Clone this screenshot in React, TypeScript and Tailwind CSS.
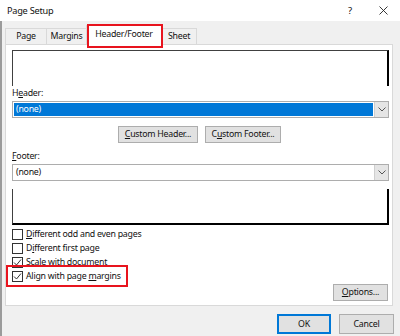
import React from 'react';

const tabs = [
  { label: 'Page', w: 'w-[42px]', active: false },
  { label: 'Margins', w: 'w-[41px]', active: false },
  { label: 'Header/Footer', w: 'w-[76px]', active: true },
  { label: 'Sheet', w: 'w-[36px]', active: false },
];

const Chevron: React.FC = () => (
  <svg width="8" height="5" viewBox="0 0 8 5" className="block">
    <polyline points="0.5,0.5 4,4 7.5,0.5" fill="none" stroke="#555" strokeWidth="1" />
  </svg>
);

const Select: React.FC<{ selected?: boolean }> = ({ selected }) => (
  <div className="h-[17px] border border-[#adadad] bg-white flex items-stretch">
    <div className="flex-1 p-[1px] flex">
      <div className={`flex-1 flex items-center pl-[2px] ${selected ? 'bg-[#0078d7] text-white' : ''}`}>(none)</div>
    </div>
    <div className="w-[14px] bg-[#e5e5e5] border-l border-[#cfcfcf] flex items-center justify-center">
      <Chevron />
    </div>
  </div>
);

const Button: React.FC<{ className?: string; children: React.ReactNode }> = ({ className = '', children }) => (
  <div className={`h-[17px] bg-[#e1e1e1] border border-[#adadad] flex items-center justify-center ${className}`}>
    {children}
  </div>
);

const CheckRow: React.FC<{ checked?: boolean; children: React.ReactNode }> = ({ checked, children }) => (
  <div className="h-[14px] flex items-center">
    <div className="w-[11px] h-[11px] border border-[#333] bg-white flex items-center justify-center">
      {checked && (
        <svg width="9" height="9" viewBox="0 0 9 9" className="block">
          <polyline points="1,4.5 3.5,7 8,1.5" fill="none" stroke="#333" strokeWidth="1" />
        </svg>
      )}
    </div>
    <span className="ml-[3px]">{children}</span>
  </div>
);

export default function App() {
  return (
    <div className="w-[400px] h-[336px] bg-[#f0f0f0] relative overflow-hidden font-['Noto_Sans',sans-serif] text-[8.8px] tracking-[-0.25px] leading-none text-[#111]">
      {/* title bar */}
      <div className="h-[21px] bg-white flex items-center pl-[7px]">
        <span className="text-[9.2px]">Page Setup</span>
        <span className="ml-auto w-[10px] text-center text-[9.5px]">?</span>
        <svg width="9" height="9" viewBox="0 0 9 9" className="ml-[24px] mr-[12px]">
          <path d="M0.5 0.5 L8.5 8.5 M8.5 0.5 L0.5 8.5" stroke="#222" strokeWidth="0.9" />
        </svg>
      </div>

      <div className="h-[315px] border-l-2 border-[#9b9b9b] pl-[3px] pr-[7px] flex flex-col">
        {/* tabs */}
        <div className="h-[23px] flex items-end relative z-10">
          {tabs.map((t) => (
            <div
              key={t.label}
              className={`${t.w} flex items-center justify-center border border-b-0 border-[#d9d9d9] -mr-px ${
                t.active ? 'h-[20px] -mb-px bg-white pb-[2px]' : 'h-[16px] bg-[#f0f0f0]'
              }`}
            >
              {t.label}
            </div>
          ))}
        </div>

        {/* panel */}
        <div className="h-[262px] bg-white border border-[#d9d9d9] pl-[6px] pr-[3px] pt-[5px] flex flex-col">
          <div className="h-[36px] border-t border-l border-[#404040] border-r-2 border-r-black" />

          <div className="h-[15px] flex items-center">
            H<span className="underline">e</span>ader:
          </div>
          <Select selected />

          <div className="mt-[8px] ml-[106px] flex gap-[7px]">
            <Button className="w-[80px]">
              <span><span className="underline">C</span>ustom Header...</span>
            </Button>
            <Button className="w-[76px]">
              <span>C<span className="underline">u</span>stom Footer...</span>
            </Button>
          </div>

          <div className="mt-[6px] h-[15px] flex items-center">
            <span className="underline">F</span>ooter:
          </div>
          <Select />

          <div className="mt-[8px] h-[36px] border-l border-[#404040] border-b-2 border-b-black border-r-2 border-r-black" />

          <div className="mt-[2px] flex flex-col">
            <CheckRow>
              <span className="underline">D</span>ifferent odd and even pages
            </CheckRow>
            <CheckRow>
              D<span className="underline">i</span>fferent first page
            </CheckRow>
            <CheckRow checked>
              Sca<span className="underline">l</span>e with document
            </CheckRow>
            <CheckRow checked>
              Align with page <span className="underline">m</span>argins
            </CheckRow>
          </div>

          <div className="mt-[1px] flex justify-end pr-[1px]">
            <Button className="w-[55px]">
              <span><span className="underline">O</span>ptions...</span>
            </Button>
          </div>
        </div>

        {/* dialog buttons */}
        <div className="mt-[8px] -mr-px flex justify-end gap-[8px]">
          <div className="w-[54px] h-[20px] bg-[#e1e1e1] border-2 border-[#0078d7] flex items-center justify-center">OK</div>
          <div className="w-[55px] h-[20px] bg-[#e1e1e1] border border-[#adadad] flex items-center justify-center">Cancel</div>
        </div>
      </div>

      {/* red annotation boxes */}
      <div className="absolute left-[87px] top-[24px] w-[76px] h-[24px] border-2 border-[#e8141e] z-20" />
      <div className="absolute left-[6px] top-[265px] w-[122px] h-[22px] border-2 border-[#e8141e] z-20" />
    </div>
  );
}
